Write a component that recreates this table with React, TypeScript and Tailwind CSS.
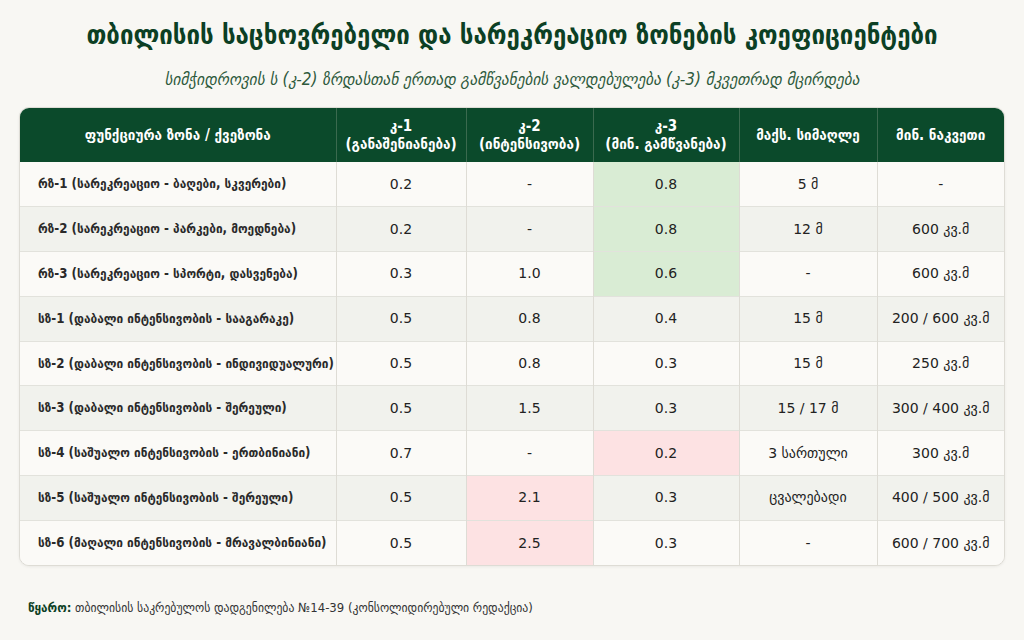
import React from "react";

type Row = {
  zone: string;
  k1: string;
  k2: string;
  k3: string;
  height: string;
  plot: string;
  k2Hot?: boolean;
  k3Hot?: boolean;
  k3Green?: boolean;
};

const rows: Row[] = [
  { zone: "რზ-1 (სარეკრეაციო - ბაღები, სკვერები)", k1: "0.2", k2: "-", k3: "0.8", height: "5 მ", plot: "-", k3Green: true },
  { zone: "რზ-2 (სარეკრეაციო - პარკები, მოედნება)", k1: "0.2", k2: "-", k3: "0.8", height: "12 მ", plot: "600 კვ.მ", k3Green: true },
  { zone: "რზ-3 (სარეკრეაციო - სპორტი, დასვენება)", k1: "0.3", k2: "1.0", k3: "0.6", height: "-", plot: "600 კვ.მ", k3Green: true },
  { zone: "სზ-1 (დაბალი ინტენსივობის - სააგარაკე)", k1: "0.5", k2: "0.8", k3: "0.4", height: "15 მ", plot: "200 / 600 კვ.მ" },
  { zone: "სზ-2 (დაბალი ინტენსივობის - ინდივიდუალური)", k1: "0.5", k2: "0.8", k3: "0.3", height: "15 მ", plot: "250 კვ.მ" },
  { zone: "სზ-3 (დაბალი ინტენსივობის - შერეული)", k1: "0.5", k2: "1.5", k3: "0.3", height: "15 / 17 მ", plot: "300 / 400 კვ.მ" },
  { zone: "სზ-4 (საშუალო ინტენსივობის - ერთბინიანი)", k1: "0.7", k2: "-", k3: "0.2", height: "3 სართული", plot: "300 კვ.მ", k3Hot: true },
  { zone: "სზ-5 (საშუალო ინტენსივობის - შერეული)", k1: "0.5", k2: "2.1", k3: "0.3", height: "ცვალებადი", plot: "400 / 500 კვ.მ", k2Hot: true },
  { zone: "სზ-6 (მაღალი ინტენსივობის - მრავალბინიანი)", k1: "0.5", k2: "2.5", k3: "0.3", height: "-", plot: "600 / 700 კვ.მ", k2Hot: true },
];

const font = { fontFamily: '"DejaVu Sans", "Noto Sans", sans-serif' };
const condensed = { fontFamily: '"DejaVu Sans Condensed", "DejaVu Sans", sans-serif' };

function cellBg(row: Row, col: "k2" | "k3") {
  if (col === "k2" && row.k2Hot) return "bg-[#fde2e3]";
  if (col === "k3" && row.k3Hot) return "bg-[#fde2e3]";
  if (col === "k3" && row.k3Green) return "bg-[#d9ecd4]";
  return "";
}

export default function App() {
  return (
    <div className="min-h-screen w-full bg-[#f8f7f3] text-[#222]" style={font}>
      <div className="flex flex-col items-center pt-[15px]">
        <h1 className="text-[26.7px] font-bold leading-[40px] text-[#0c3f24]" style={condensed}>
          თბილისის საცხოვრებელი და სარეკრეაციო ზონების კოეფიციენტები
        </h1>
        <p className="mt-[13px] text-[17px] italic leading-[22px] text-[#2e5a3c]" style={condensed}>
          სიმჭიდროვის ს (კ-2) ზრდასთან ერთად გამწვანების ვალდებულება (კ-3) მკვეთრად მცირდება
        </p>
      </div>

      <div className="mx-[19px] mt-[17px] overflow-hidden rounded-[10px] border border-[#dedcd5] bg-[#fbfaf7] shadow-[0_1px_3px_rgba(0,0,0,0.06)]">
        <table className="w-full table-fixed border-collapse">
          <colgroup>
            <col className="w-[316px]" />
            <col className="w-[130px]" />
            <col className="w-[127px]" />
            <col className="w-[146px]" />
            <col className="w-[138px]" />
            <col />
          </colgroup>
          <thead>
            <tr className="h-[54px] bg-[#0b4a2b] text-[15px] leading-[18px] text-white" style={condensed}>
              <th className="border-r border-[#3b6a4f] font-bold">ფუნქციურა ზონა / ქვეზონა</th>
              <th className="border-r border-[#3b6a4f] font-bold">
                კ-1
                <br />
                (განაშენიანება)
              </th>
              <th className="border-r border-[#3b6a4f] font-bold">
                კ-2
                <br />
                (ინტენსივობა)
              </th>
              <th className="border-r border-[#3b6a4f] font-bold">
                კ-3
                <br />
                (მინ. გამწვანება)
              </th>
              <th className="border-r border-[#3b6a4f] font-bold">მაქს. სიმაღლე</th>
              <th className="font-bold">მინ. ნაკვეთი</th>
            </tr>
          </thead>
          <tbody>
            {rows.map((row, i) => (
              <tr
                key={row.zone}
                className={`h-[44.8px] text-[14px] ${i % 2 === 0 ? "bg-[#fbfaf7]" : "bg-[#f1f2ed]"} ${
                  i < rows.length - 1 ? "border-b border-[#e2e2dc]" : ""
                }`}
              >
                <td
                  className="whitespace-nowrap border-r border-[#dedcd5] pl-[18px] text-[13.2px] font-bold text-[#2a2a2a]"
                  style={condensed}
                >
                  {row.zone}
                </td>
                <td className="border-r border-[#dedcd5] text-center">{row.k1}</td>
                <td className={`border-r border-[#dedcd5] text-center ${cellBg(row, "k2")}`}>{row.k2}</td>
                <td className={`border-r border-[#dedcd5] text-center ${cellBg(row, "k3")}`}>{row.k3}</td>
                <td className="border-r border-[#dedcd5] text-center">{row.height}</td>
                <td className="text-center">{row.plot}</td>
              </tr>
            ))}
          </tbody>
        </table>
      </div>

      <p className="ml-[28px] mt-[32px] text-[13px] text-[#333]" style={condensed}>
        <span className="font-bold text-[#0c3f24]">წყარო:</span> თბილისის საკრებულოს დადგენილება №14-39 (კონსოლიდირებული რედაქცია)
      </p>
    </div>
  );
}
